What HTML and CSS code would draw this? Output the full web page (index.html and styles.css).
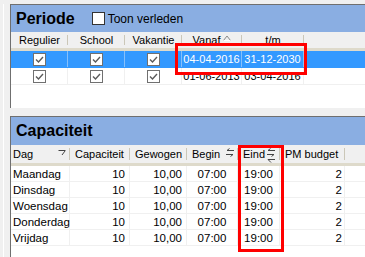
FILE: index.html
```html
<!DOCTYPE html>
<html lang="nl">
<head>
	<meta charset="UTF-8">
	<title>Periode en capaciteit</title>
	<link rel="stylesheet" href="styles.css">
</head>
<body>
	<div class="frame">
		<!-- periodes -->
		<section class="panel periode">
			<div class="title">
				<h1>Periode</h1>
				<label class="toggle"><span class="box"></span>Toon verleden</label>
			</div>
			<div class="row head">
				<span>Regulier</span>
				<span>School</span>
				<span>Vakantie</span>
				<span>Vanaf<svg class="sort" width="8" height="6" viewBox="0 0 8 6"><path d="M0.5 5.5 L4 1 L7.5 5.5" fill="none" stroke="#8a8a8a"/><path d="M0.5 5.5 H7.5" stroke="#fff"/></svg></span>
				<span>t/m</span>
			</div>
			<div class="row sel">
				<span><svg class="chk" width="13" height="13" viewBox="0 0 13 13"><rect x="0.5" y="0.5" width="12" height="12" fill="#fff" stroke="#707070"/><path d="M3 6.5 L5.5 9 L10 4" fill="none" stroke="#5a5a5a" stroke-width="1.4"/></svg></span>
				<span><svg class="chk" width="13" height="13" viewBox="0 0 13 13"><rect x="0.5" y="0.5" width="12" height="12" fill="#fff" stroke="#707070"/><path d="M3 6.5 L5.5 9 L10 4" fill="none" stroke="#5a5a5a" stroke-width="1.4"/></svg></span>
				<span><svg class="chk" width="13" height="13" viewBox="0 0 13 13"><rect x="0.5" y="0.5" width="12" height="12" fill="#fff" stroke="#707070"/><path d="M3 6.5 L5.5 9 L10 4" fill="none" stroke="#5a5a5a" stroke-width="1.4"/></svg></span>
				<span>04-04-2016</span>
				<span>31-12-2030</span>
			</div>
			<div class="row">
				<span><svg class="chk" width="13" height="13" viewBox="0 0 13 13"><rect x="0.5" y="0.5" width="12" height="12" fill="#fff" stroke="#707070"/><path d="M3 6.5 L5.5 9 L10 4" fill="none" stroke="#5a5a5a" stroke-width="1.4"/></svg></span>
				<span><svg class="chk" width="13" height="13" viewBox="0 0 13 13"><rect x="0.5" y="0.5" width="12" height="12" fill="#fff" stroke="#707070"/><path d="M3 6.5 L5.5 9 L10 4" fill="none" stroke="#5a5a5a" stroke-width="1.4"/></svg></span>
				<span><svg class="chk" width="13" height="13" viewBox="0 0 13 13"><rect x="0.5" y="0.5" width="12" height="12" fill="#fff" stroke="#707070"/><path d="M3 6.5 L5.5 9 L10 4" fill="none" stroke="#5a5a5a" stroke-width="1.4"/></svg></span>
				<span>01-06-2013</span>
				<span>03-04-2016</span>
			</div>
		</section>

		<!-- capaciteit per dag -->
		<section class="panel cap">
			<div class="title">
				<h1>Capaciteit</h1>
			</div>
			<div class="row head">
				<span>Dag<svg class="ico" width="8" height="6" viewBox="0 0 8 6"><path d="M0.5 0.5 H7.5 M7 1 L4 5" fill="none" stroke="#444"/></svg></span>
				<span>Capaciteit</span>
				<span>Gewogen</span>
				<span>Begin<svg class="ico" width="8" height="9" viewBox="0 0 8 9"><path d="M1 2.5 H8 M1 2.5 L3.5 0.5 M0 6.5 H7 M7 6.5 L4.5 8.5" fill="none" stroke="#444"/></svg></span>
				<span class="eind">Eind<svg class="ico" width="9" height="15" viewBox="0 0 9 15"><path d="M1 2.5 H8 M1 2.5 L3.5 0.5 M0 6.5 H7 M7 6.5 L4.5 8.5 M1 11.5 H8 M1 11.5 L4 14.5" fill="none" stroke="#444"/></svg></span>
				<span>PM budget</span>
			</div>
			<div class="row"><span class="txt">Maandag</span><span class="num">10</span><span class="num">10,00</span><span>07:00</span><span>19:00</span><span class="num">2</span></div>
			<div class="row"><span class="txt">Dinsdag</span><span class="num">10</span><span class="num">10,00</span><span>07:00</span><span>19:00</span><span class="num">2</span></div>
			<div class="row"><span class="txt">Woensdag</span><span class="num">10</span><span class="num">10,00</span><span>07:00</span><span>19:00</span><span class="num">2</span></div>
			<div class="row"><span class="txt">Donderdag</span><span class="num">10</span><span class="num">10,00</span><span>07:00</span><span>19:00</span><span class="num">2</span></div>
			<div class="row"><span class="txt">Vrijdag</span><span class="num">10</span><span class="num">10,00</span><span>07:00</span><span>19:00</span><span class="num">2</span></div>
		</section>
	</div>

	<!-- rode markeringen -->
	<div class="mark mark-dates"></div>
	<div class="mark mark-eind"></div>
</body>
</html>
```

FILE: styles.css
```css
* {
	box-sizing: border-box;
}

body {
	position: relative;
	margin: 0;
	width: 365px;
	height: 257px;
	overflow: hidden;
	padding: 4px 0 0 3px;
	background-color: #f0f0f0;
	font-family: "Liberation Sans", Arial, sans-serif;
	font-size: 11px;
	color: #000;
}

.frame {
	height: 100%;
	border-left: 1px solid #fff;
	padding-left: 6px;
}

.panel {
	background-color: #fff;
	border-top: 1px solid #6f6f6f;
	border-left: 1px solid #6f6f6f;
}

.panel.periode {
	height: 104px;
}

.panel.cap {
	margin-top: 8px;
	height: 141px;
}

.title {
	display: flex;
	align-items: center;
	height: 27px;
	padding-left: 5px;
	background-color: #8aaee2;
}

.cap .title {
	height: 28px;
}

.title h1 {
	margin: 0;
	font-size: 16px;
	font-weight: bold;
}

.toggle {
	display: flex;
	align-items: center;
	gap: 3px;
	margin-left: 17px;
	font-size: 12px;
}

.toggle .box {
	width: 13px;
	height: 13px;
	background-color: #fff;
	border: 1px solid #333;
}

/* rijen */
.row {
	display: grid;
	border-bottom: 1px solid #f0f0f0;
}

.periode .row {
	grid-template-columns: 57px 57px 57px 60px 62px;
	height: 17px;
}

.cap .row {
	grid-template-columns: 59px 60px 57px 51px 42px 65px;
	height: 16px;
	font-size: 11.5px;
}

.row > span {
	display: flex;
	align-items: center;
	justify-content: center;
	border-right: 1px solid #f0f0f0;
	white-space: nowrap;
}

.row > span.txt {
	justify-content: flex-start;
	padding-left: 2px;
}

.row > span.num {
	justify-content: flex-end;
	padding-right: 4px;
}

.cap .row > span.num:last-child {
	padding-right: 2px;
}

/* kolomkoppen */
.row.head {
	background-color: #f0f0f0;
	border-bottom: 3px solid #dedacb;
}

.periode .row.head {
	height: 19px;
}

.cap .row.head {
	height: 21px;
	font-size: 11px;
}

.row.head > span {
	border-right: none;
	background: linear-gradient(#cbc7b8, #cbc7b8) right 0 top 3px / 1px calc(100% - 6px) no-repeat;
}

.cap .row.head > span {
	justify-content: space-between;
	padding: 0 4px 0 5px;
}

.cap .row.head > span:first-child {
	padding-left: 2px;
}

.sort {
	margin-left: 3px;
	margin-bottom: 4px;
}

.ico {
	margin-bottom: 3px;
}

.eind .ico {
	margin-bottom: -3px;
}

/* geselecteerde rij */
.row.sel {
	background-color: #3399ff;
	color: #fff;
	border-bottom-color: #3399ff;
}

.row.sel > span {
	border-right-color: #86c0fb;
}

.mark {
	position: absolute;
	border: 3px solid #f00;
}

.mark-dates {
	left: 175px;
	top: 43px;
	width: 132px;
	height: 32px;
}

.mark-eind {
	left: 238px;
	top: 145px;
	width: 46px;
	height: 107px;
}
```
